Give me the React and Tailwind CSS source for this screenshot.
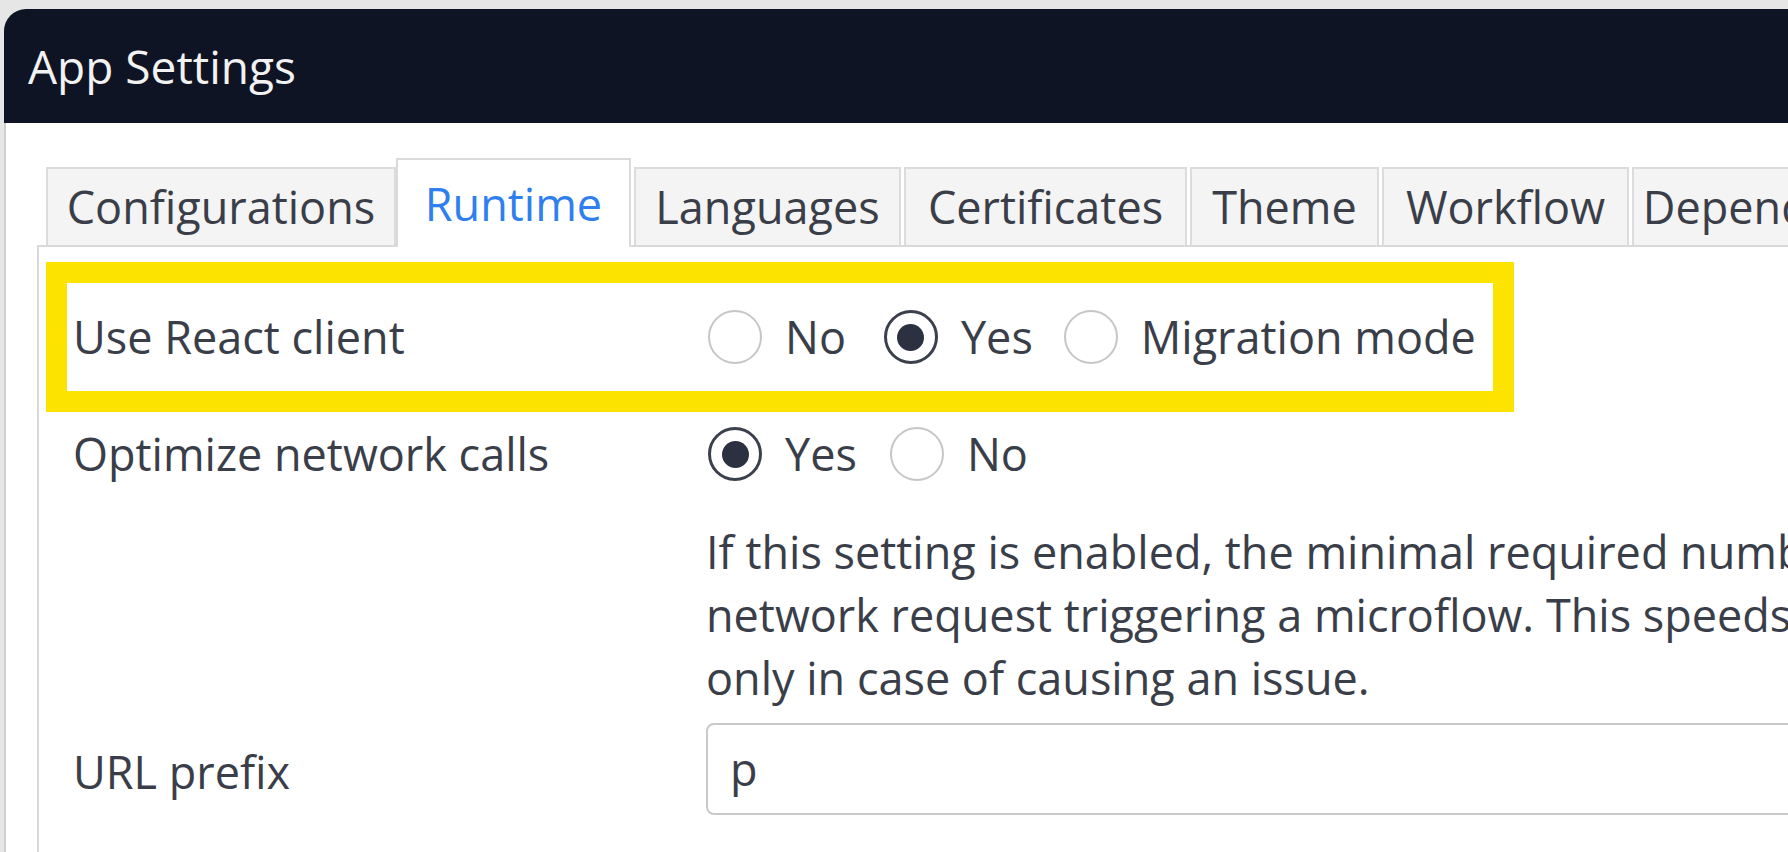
import React from 'react';

const TABS = [
  { label: 'Configurations', w: 'w-[350px]' },
  { label: 'Runtime', w: 'w-[235px]', active: true },
  { label: 'Languages', w: 'w-[267px]' },
  { label: 'Certificates', w: 'w-[283px]' },
  { label: 'Theme', w: 'w-[189px]' },
  { label: 'Workflow', w: 'w-[247px]' },
  { label: 'Dependencies', w: 'w-[320px]' },
];

function Radio({ checked, label, className = '' }) {
  return (
    <div className={`flex items-center ${className}`}>
      {checked ? (
        <span className="flex h-[54px] w-[54px] shrink-0 items-center justify-center rounded-full border-[3px] border-[#3b404d]">
          <span className="h-[27px] w-[27px] rounded-full bg-[#2b3141]" />
        </span>
      ) : (
        <span className="h-[54px] w-[54px] shrink-0 rounded-full border-[2px] border-[#c6c6c6]" />
      )}
      <span className="ml-[23px] whitespace-nowrap">{label}</span>
    </div>
  );
}

export default function App() {
  return (
    <div className="h-[852px] w-full overflow-hidden bg-[#e6e6e6] pl-[4px] pt-[9px] font-['Open_Sans',sans-serif] text-[45px] text-[#3a3e49]">
      <div className="flex h-full flex-col overflow-hidden rounded-tl-[22px] bg-white">
        {/* title bar */}
        <div className="flex h-[114px] shrink-0 items-center bg-[#0f1424] pl-[24px] text-[46px] text-[#f2f2f2]">
          App Settings
        </div>

        <div className="flex-1 border-l-2 border-[#cfcfcf] pl-[31px] pt-[35px]">
          {/* tabs */}
          <div className="relative z-10 flex h-[87px] items-end pl-[9px]">
            {TABS.map(t =>
              t.active ? (
                <div
                  key={t.label}
                  className={`-mb-[2px] flex h-[89px] shrink-0 items-center justify-center border-x-2 border-t-2 border-[#dadada] bg-white text-[#2f7fee] ${t.w}`}
                >
                  {t.label}
                </div>
              ) : (
                <div
                  key={t.label}
                  className={`ml-[3px] flex h-[78px] shrink-0 items-center justify-center whitespace-nowrap border-x-2 border-t-2 border-[#dcdcdc] bg-[#f4f4f4] first:ml-0 ${t.w}`}
                >
                  {t.label}
                </div>
              )
            )}
          </div>

          {/* panel */}
          <div className="h-full border-l-2 border-t-2 border-[#d9d9d9] pl-[7px] pt-[15px]">
            <div className="flex h-[150px] w-[1468px] items-center border-[21px] border-[#fde300] pl-[6px]">
              <div className="w-[633px] shrink-0">Use React client</div>
              <div className="ml-[2px] flex items-center">
                <Radio label="No" />
                <Radio label="Yes" checked className="ml-[38px]" />
                <Radio label="Migration mode" className="ml-[31px]" />
              </div>
            </div>

            <div className="flex h-[84px] items-center pl-[27px]">
              <div className="w-[633px] shrink-0">Optimize network calls</div>
              <div className="ml-[2px] flex items-center gap-[33px]">
                <Radio label="Yes" checked />
                <Radio label="No" />
              </div>
            </div>

            <div className="mt-[24px] whitespace-nowrap pl-[660px] leading-[63px]">
              <div>If this setting is enabled, the minimal required number of objects is sent with each</div>
              <div>network request triggering a microflow. This speeds up the application. Disable this</div>
              <div>only in case of causing an issue.</div>
            </div>

            <div className="mt-[14px] flex items-center pl-[27px]">
              <div className="w-[633px] shrink-0 pt-[6px]">URL prefix</div>
              <div className="flex h-[92px] w-[1400px] shrink-0 items-center rounded-[8px] border-2 border-[#c9c9c9] pl-[22px]">
                p
              </div>
            </div>
          </div>
        </div>
      </div>
    </div>
  );
}
